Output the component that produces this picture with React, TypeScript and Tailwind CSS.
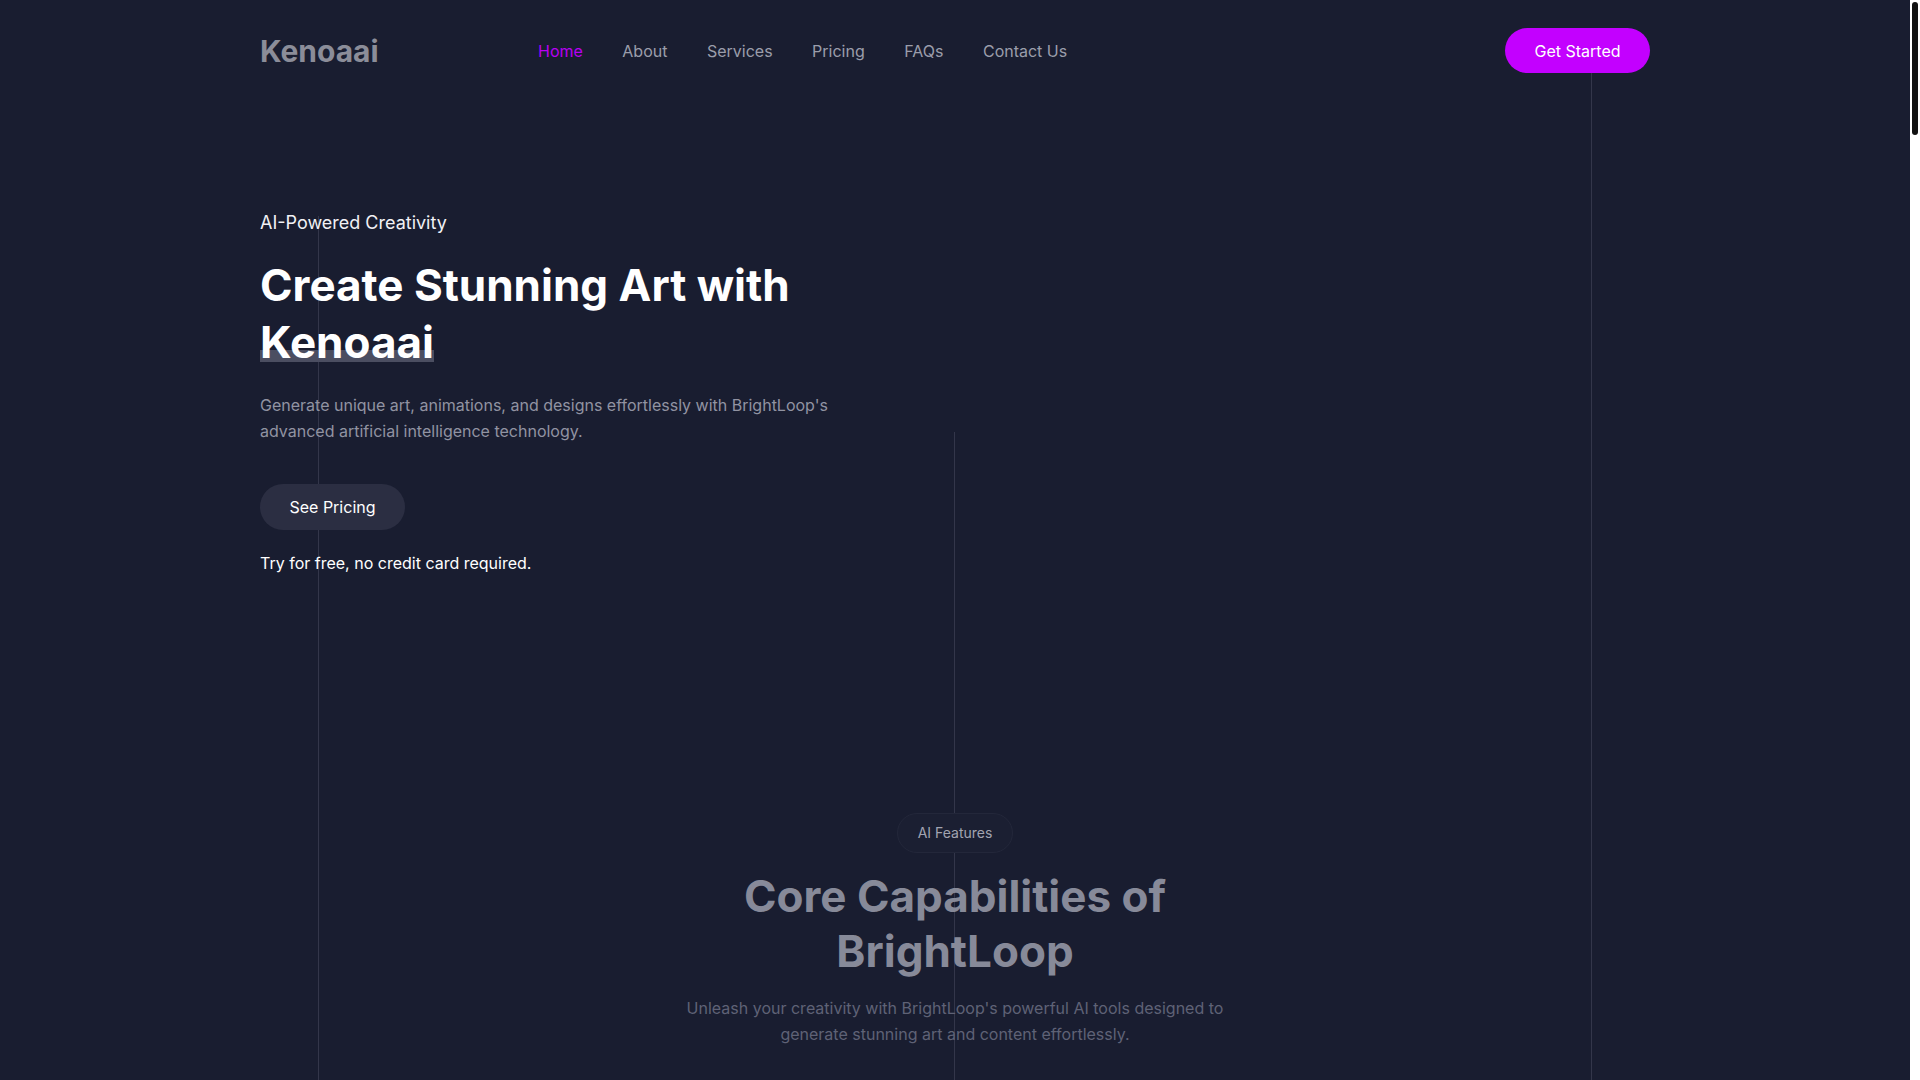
const navLinks = ['Home', 'About', 'Services', 'Pricing', 'FAQs', 'Contact Us'];

function Header() {
  return (
    <header className="relative z-10 flex items-center py-7">
      <div className="w-[278px]">
        <a href="#" className="text-[30px] font-bold leading-9 text-[#8b8d99]">
          Kenoaai
        </a>
      </div>
      <nav className="flex items-center gap-[39.5px] text-base">
        {navLinks.map((link, i) => (
          <a
            key={link}
            href="#"
            className={i === 0 ? 'text-[#b800f2]' : 'text-[#9b9dab]'}
          >
            {link}
          </a>
        ))}
      </nav>
      <button className="ml-auto flex h-[45px] w-[145px] items-center justify-center rounded-full bg-[#c300ff] text-base text-white">
        Get Started
      </button>
    </header>
  );
}

function Hero() {
  return (
    <section className="relative z-10 pt-[108px]">
      <p className="text-lg leading-7 text-[#f1f1f5]">AI-Powered Creativity</p>
      <h1 className="mt-5 text-[44px] font-bold leading-[57px] text-white">
        Create Stunning Art with
        <br />
        <span className="relative inline-block">
          <span className="absolute inset-x-0 bottom-[9px] h-[12px] bg-[#4b4e61]" />
          <span className="relative">Kenoaai</span>
        </span>
      </h1>
      <p className="mt-[21px] max-w-xl text-base leading-[26px] text-[#9193a2]">
        Generate unique art, animations, and designs effortlessly with BrightLoop's advanced
        artificial intelligence technology.
      </p>
      <button className="mt-10 flex h-[46px] w-[145px] items-center justify-center rounded-full bg-[#2b2e42] text-base text-white">
        See Pricing
      </button>
      <p className="mt-[21px] text-base leading-6 text-white">Try for free, no credit card required.</p>
    </section>
  );
}

function Features() {
  return (
    <section className="relative z-10 mt-[238px] flex flex-col items-center text-center">
      <span className="rounded-full border border-[#23273a] bg-[#1b1f32] px-5 py-[9px] text-sm leading-5 text-[#a2a4b1]">
        AI Features
      </span>
      <h2 className="mt-4 max-w-xl text-[44px] font-bold leading-[55px] text-[#878a99]">
        Core Capabilities of BrightLoop
      </h2>
      <p className="mt-4 max-w-xl text-base leading-[26px] text-[#5f6276]">
        Unleash your creativity with BrightLoop's powerful AI tools designed to generate stunning
        art and content effortlessly.
      </p>
    </section>
  );
}

export default function App() {
  return (
    <div className="flex h-screen overflow-hidden bg-[#191d30] font-['Inter',sans-serif]">
      <main className="min-w-0 flex-1">
        <div className="relative mx-auto max-w-[1390px] pb-[7700px]">
          {/* decorative grid lines */}
          <div className="pointer-events-none absolute bottom-0 left-[58px] top-[216px] w-px bg-[#33364a]" />
          <div className="pointer-events-none absolute bottom-0 left-[694px] top-[432px] w-px bg-[#33364a]" />
          <div className="pointer-events-none absolute bottom-0 right-[58px] top-[60px] w-px bg-[#33364a]" />

          <Header />
          <Hero />
          <Features />
        </div>
      </main>
      {/* page scrollbar */}
      <aside className="w-[10px] shrink-0 bg-white px-[2px] pt-[2px]">
        <div className="h-[133px] rounded-full bg-[#111111]" />
      </aside>
    </div>
  );
}
